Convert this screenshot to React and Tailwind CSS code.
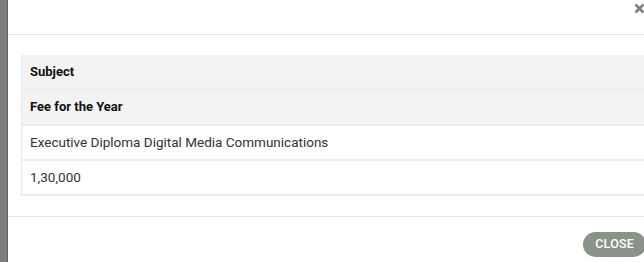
export default function App() {
  const font = { fontFamily: "Roboto, 'Liberation Sans', Arial, sans-serif" };
  return (
    <div className="w-[644px] h-[262px] overflow-hidden flex bg-white" style={font}>
      <div className="w-[8px] shrink-0 h-full bg-[#7c7c7c] border-r border-[#626262]" />
      <div className="w-[640px] shrink-0 h-full flex flex-col bg-white">
        <div className="h-[35px] shrink-0 border-b border-[#e5e5e5] flex justify-end items-start pt-[3px] pr-[3px]">
          <svg width="11" height="11" viewBox="0 0 11 11">
            <path d="M1.5 1.5 L9.5 9.5 M9.5 1.5 L1.5 9.5" stroke="#7f7f7f" strokeWidth="2.6" strokeLinecap="butt" />
          </svg>
        </div>
        <div className="pl-[13px] pr-0 pt-[20px] pb-[20px] shrink-0">
          <div className="border-l border-[#e8e8e8] w-[640px]">
            <div className="h-[35px] bg-[#f3f3f3] border-b border-[#e9e9e9] flex items-center pl-[8px] font-bold text-[13px] text-[#111]">Subject</div>
            <div className="h-[36px] bg-[#f3f3f3] border-b-2 border-[#ebebeb] flex items-center pl-[8px] font-bold text-[13px] text-[#111]">Fee for the Year</div>
            <div className="h-[35px] bg-white border-b-2 border-[#ececec] flex items-center pl-[8px] text-[13.5px] text-[#333]">Executive Diploma Digital Media Communications</div>
            <div className="h-[35px] bg-white border-b-2 border-[#ececec] flex items-center pl-[8px] text-[13.5px] text-[#333]">1,30,000</div>
          </div>
        </div>
        <div className="border-t border-[#e5e5e5] flex justify-end pt-[15px] pr-[2px]">
          <button className="h-[25px] px-[12px] rounded-full bg-[#8a9389] text-white text-[12.5px] font-medium uppercase tracking-[0.2px] flex items-center">
            Close
          </button>
        </div>
      </div>
    </div>
  );
}
